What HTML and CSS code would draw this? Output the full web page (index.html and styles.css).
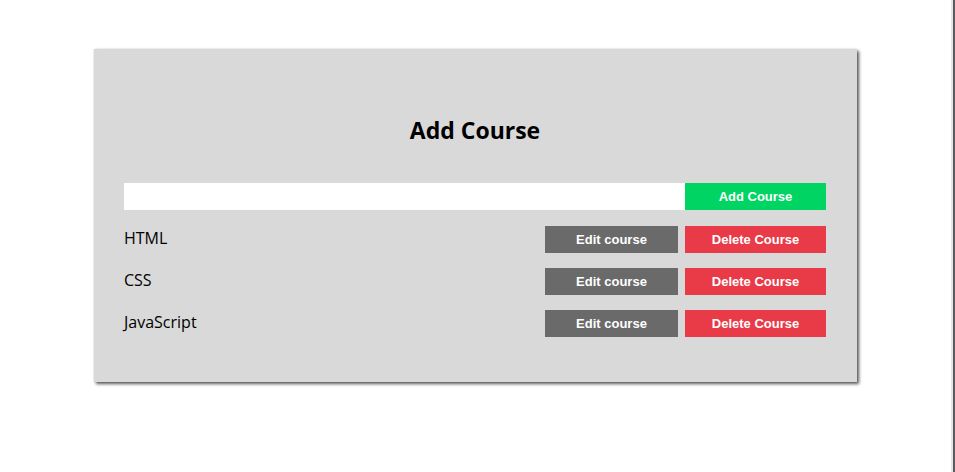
FILE: index.html
```html
<!DOCTYPE html>
<html lang="en">
<head>
<meta charset="utf-8">
<title>Add Course</title>
<link rel="stylesheet" href="styles.css">
</head>
<body>
<main class="page">
  <section class="card">
    <h2 class="title">Add Course</h2>
    <form class="add-row" onsubmit="return false">
      <input class="course-input" type="text" aria-label="Course name">
      <button class="btn btn-add" type="submit">Add Course</button>
    </form>
    <ul class="course-list">
      <li class="course-row">
        <span class="course-name">HTML</span>
        <div class="actions">
          <button class="btn btn-edit">Edit course</button>
          <button class="btn btn-delete">Delete Course</button>
        </div>
      </li>
      <li class="course-row">
        <span class="course-name">CSS</span>
        <div class="actions">
          <button class="btn btn-edit">Edit course</button>
          <button class="btn btn-delete">Delete Course</button>
        </div>
      </li>
      <li class="course-row">
        <span class="course-name">JavaScript</span>
        <div class="actions">
          <button class="btn btn-edit">Edit course</button>
          <button class="btn btn-delete">Delete Course</button>
        </div>
      </li>
    </ul>
  </section>
</main>
<div class="edge"></div>
</body>
</html>
```

FILE: styles.css
```css
html, body {
  margin: 0;
  padding: 0;
  background: #ffffff;
}

body {
  display: flex;
  min-height: 100vh;
  font-family: "Open Sans", "DejaVu Sans", sans-serif;
  color: #000;
}

.page {
  flex: 1;
  display: flex;
  justify-content: center;
  align-items: flex-start;
  padding-top: 49px;
}

.edge {
  width: 2px;
  flex: none;
  background: #e4e4e8;
  border-right: 2px solid #5c5c60;
}

.card {
  width: 702px;
  padding: 65px 31px 45px 30px;
  background: #d9d9d9;
  box-shadow: 2px 2px 3px rgba(0, 0, 0, 0.65), 0 0 2px rgba(0, 0, 0, 0.12);
}

.title {
  margin: 0 0 37px;
  font-size: 23px;
  line-height: 32px;
  font-weight: 700;
  text-align: center;
}

.add-row {
  display: flex;
  margin: 0;
  height: 27px;
}

.course-input {
  flex: 1;
  border: none;
  margin: 0;
  padding: 0 6px;
  background: #fff;
  outline: none;
  font-size: 14px;
}

.btn {
  border: none;
  margin: 0;
  height: 27px;
  padding: 0;
  font-family: "Liberation Sans", Arial, sans-serif;
  font-size: 13px;
  font-weight: 700;
  color: #fff;
  cursor: pointer;
}

.btn-add {
  width: 141px;
  background: #00d563;
}

.btn-edit {
  width: 133px;
  background: #6a6a6a;
}

.btn-delete {
  width: 141px;
  background: #e83a47;
}

.course-list {
  list-style: none;
  margin: 16px 0 0;
  padding: 0;
  display: flex;
  flex-direction: column;
  gap: 15px;
}

.course-row {
  display: flex;
  align-items: center;
  justify-content: space-between;
  height: 27px;
}

.course-name {
  font-size: 16px;
  line-height: 20px;
  padding-bottom: 3px;
}

.actions {
  display: flex;
  gap: 7px;
}
```
